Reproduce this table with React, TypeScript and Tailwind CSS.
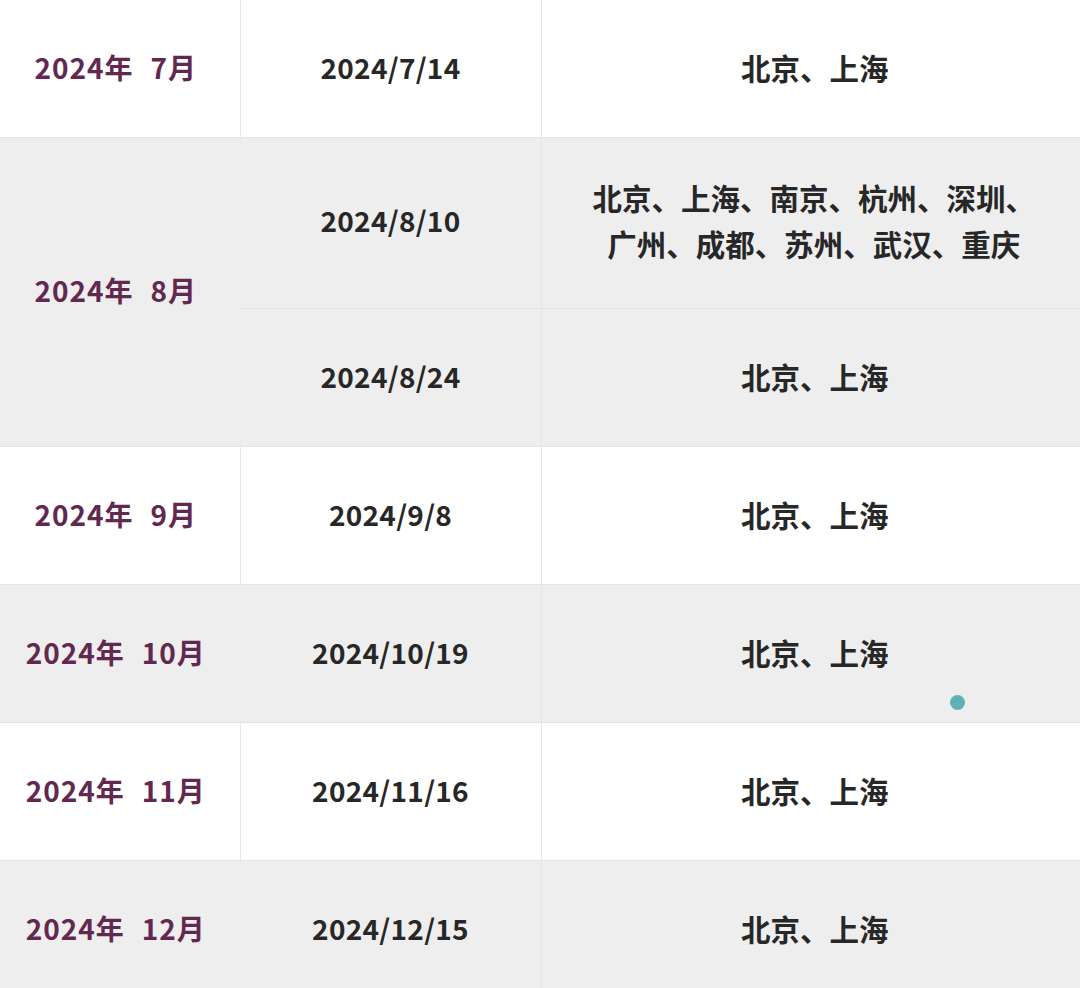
const rows = [
    { year: '2024年', month: '7月', dates: [{ date: '2024/7/14', cities: ['北京、上海'] }], gray: false },
    {
        year: '2024年',
        month: '8月',
        dates: [
            { date: '2024/8/10', cities: ['北京、上海、南京、杭州、深圳、', '广州、成都、苏州、武汉、重庆'] },
            { date: '2024/8/24', cities: ['北京、上海'] },
        ],
        gray: true,
    },
    { year: '2024年', month: '9月', dates: [{ date: '2024/9/8', cities: ['北京、上海'] }], gray: false },
    { year: '2024年', month: '10月', dates: [{ date: '2024/10/19', cities: ['北京、上海'] }], gray: true, dot: true },
    { year: '2024年', month: '11月', dates: [{ date: '2024/11/16', cities: ['北京、上海'] }], gray: false },
    { year: '2024年', month: '12月', dates: [{ date: '2024/12/15', cities: ['北京、上海'] }], gray: true },
];

export default function App() {
    return (
        <div
            className="w-[1080px] h-[988px] overflow-hidden bg-white"
            style={{ fontFamily: '"Noto Sans CJK SC", "Noto Sans", sans-serif' }}
        >
            <table className="w-[1080px] table-fixed border-collapse">
                <colgroup>
                    <col className="w-[240px]" />
                    <col className="w-[301px]" />
                    <col className="w-[539px]" />
                </colgroup>
                <tbody>
                    {rows.map((row, ri) =>
                        row.dates.map((d, i) => {
                            const bg = row.gray ? 'bg-[#eeeeee]' : 'bg-white';
                            const h = d.cities.length > 1 ? 'h-[171px]' : ri === 0 ? 'h-[137px]' : 'h-[138px]';
                            const pb = d.cities.length > 1 ? 'pb-[6px]' : 'pb-[3px]';
                            return (
                                <tr key={row.month + d.date} className={`${bg} border-b border-[#e4e4e4]`}>
                                    {i === 0 && (
                                        <td
                                            rowSpan={row.dates.length}
                                            className={`${bg} pr-[8px] pb-[3px] text-center align-middle text-[28px] font-bold text-[#62284f] tracking-[1px] border-r ${row.gray ? 'border-[#ececec]' : 'border-[#e8e8e8]'}`}
                                        >
                                            <span>{row.year}</span>
                                            <span className="ml-[17px]">{row.month}</span>
                                        </td>
                                    )}
                                    <td className={`${h} ${pb} text-center align-middle text-[28px] font-bold tracking-[0.3px] text-[#272727] border-r border-[#e6e6e6]`}>
                                        {d.date}
                                    </td>
                                    <td className={`relative ${pb} text-center align-middle text-[29.5px] font-bold leading-[46px] text-[#272727]`}>
                                        {d.cities.map((c) => (
                                            <div key={c} className={d.cities.length > 1 ? 'pl-[6px]' : 'pl-[8px]'}>{c}</div>
                                        ))}
                                        {row.dot && (
                                            <span className="absolute left-[408px] top-[110px] w-[15px] h-[15px] rounded-full bg-[#5eb1b7]" />
                                        )}
                                    </td>
                                </tr>
                            );
                        })
                    )}
                </tbody>
            </table>
        </div>
    );
}
